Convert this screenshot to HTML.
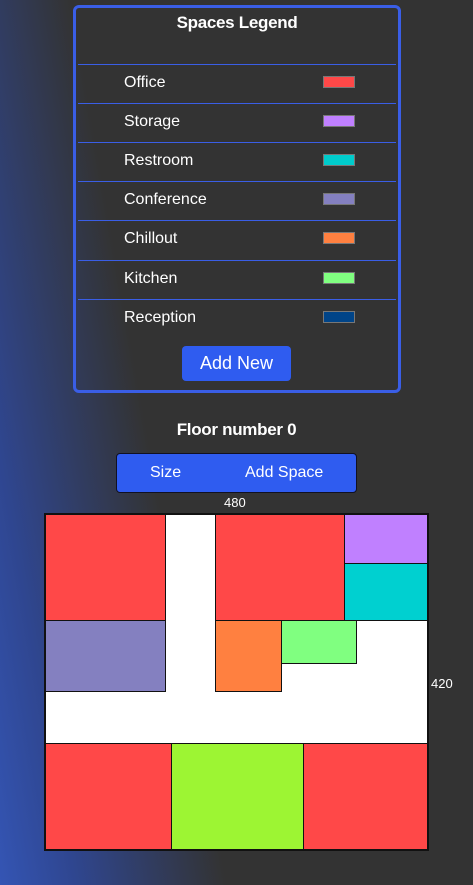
<!DOCTYPE html>
<html><head><meta charset="utf-8"><style>
*{box-sizing:border-box;margin:0;padding:0}
html,body{width:473px;height:885px;overflow:hidden}
body{background:linear-gradient(80deg,#3455b4 0%,#2f4690 12%,#333 36%,#333 100%);font-family:"Liberation Sans",sans-serif;color:#fff;position:relative}
.legend{position:absolute;left:73px;top:5px;width:328px;height:388px;border:3px solid #3a5ee6;border-radius:6px}
.title{position:absolute;top:5px;left:0;right:0;text-align:center;font-weight:bold;font-size:17px;letter-spacing:-0.3px}
.row{position:absolute;left:2px;right:2px;height:39px;border-top:1px solid #3a5ee6;font-size:16px}
.row span{position:absolute;left:46px;top:9px}
.row i{position:absolute;left:245px;top:11px;width:32px;height:12px;border:1px solid #777}
.btn{position:absolute;background:#2f5cf0;border-radius:4px;color:#fff;text-align:center}
.r{position:absolute;border:1px solid #111}
.canvas{position:absolute;left:44px;top:513px;width:385px;height:338px;background:#fff;border:2px solid #111}
</style></head><body>
<div class="legend">
<div class="title">Spaces Legend</div>
<div class="row" style="top:56px"><span>Office</span><i style="background:#ff4848"></i></div>
<div class="row" style="top:95px"><span>Storage</span><i style="background:#c080ff"></i></div>
<div class="row" style="top:134px"><span>Restroom</span><i style="background:#00cccc"></i></div>
<div class="row" style="top:173px"><span>Conference</span><i style="background:#8480c0"></i></div>
<div class="row" style="top:212px"><span>Chillout</span><i style="background:#ff8040"></i></div>
<div class="row" style="top:252px"><span>Kitchen</span><i style="background:#80ff80"></i></div>
<div class="row" style="top:291px"><span>Reception</span><i style="background:#004488"></i></div>
</div>
<div class="btn" style="left:182px;top:346px;width:109px;height:35px;font-size:18px;line-height:34px">Add New</div>
<div style="position:absolute;left:0;right:0;top:420px;text-align:center;font-weight:bold;font-size:17px;letter-spacing:-0.3px">Floor number 0</div>
<div class="btn" style="left:116px;top:453px;width:241px;height:40px;border:1px solid #112;font-size:16px;line-height:38px">
<span style="position:absolute;left:33px">Size</span><span style="position:absolute;left:128px">Add Space</span></div>
<div style="position:absolute;left:224px;top:495px;font-size:13px">480</div>
<div style="position:absolute;left:431px;top:676px;font-size:13px">420</div>
<div class="canvas"></div>
<div class="r" style="left:44px;top:513px;width:122px;height:108px;background:#ff4848"></div>
<div class="r" style="left:215px;top:513px;width:130px;height:108px;background:#ff4848"></div>
<div class="r" style="left:344px;top:513px;width:85px;height:51px;background:#c080ff"></div>
<div class="r" style="left:344px;top:563px;width:85px;height:58px;background:#00d0d0"></div>
<div class="r" style="left:44px;top:620px;width:122px;height:72px;background:#8480c0"></div>
<div class="r" style="left:215px;top:620px;width:67px;height:72px;background:#ff8040"></div>
<div class="r" style="left:281px;top:620px;width:76px;height:44px;background:#80ff80"></div>
<div class="r" style="left:44px;top:743px;width:128px;height:108px;background:#ff4848"></div>
<div class="r" style="left:171px;top:743px;width:133px;height:108px;background:#9df533"></div>
<div class="r" style="left:303px;top:743px;width:126px;height:108px;background:#ff4848"></div>
<div style="position:absolute;left:44px;top:513px;width:385px;height:338px;border:2px solid #111"></div>
</body></html>
